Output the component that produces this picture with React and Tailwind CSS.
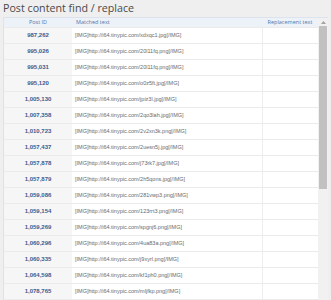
const rows = [
  ["987,262", "xdxqc1.jpg"],
  ["995,026", "20l11fq.png"],
  ["995,031", "20l11fq.png"],
  ["995,120", "o0z5ft.jpg"],
  ["1,005,130", "jpiz3l.jpg"],
  ["1,007,358", "2qo3lah.jpg"],
  ["1,010,723", "2v2xn3k.png"],
  ["1,057,437", "2uesn5j.jpg"],
  ["1,057,878", "j73rk7.jpg"],
  ["1,057,879", "2h5qons.jpg"],
  ["1,059,086", "281vwp3.png"],
  ["1,059,154", "123rrt3.png"],
  ["1,059,269", "spgnj6.png"],
  ["1,060,296", "4ua83a.png"],
  ["1,060,335", "j9xyrl.png"],
  ["1,064,598", "kf1ph0.png"],
  ["1,078,765", "mljfkp.png"],
];

export default function App() {
  return (
    <div className="h-[300px] overflow-hidden bg-[#efefef] px-[3px] font-['Open_Sans','Noto_Sans',sans-serif]">
      <h1 className="h-[17px] pt-[1px] text-[10.7px] leading-[14px] text-[#4a4a4a]">Post content find / replace</h1>

      <div className="flex h-[283px] border-t border-l border-[#dde3ec] bg-white">
        <div className="min-w-0 flex-1 overflow-hidden">
          <table className="w-full table-fixed border-collapse text-[6px]">
            <colgroup>
              <col className="w-[68px]" />
              <col className="w-[190px]" />
              <col />
            </colgroup>
            <thead>
              <tr className="h-[9px] bg-[#edf2f9] text-[5.5px] text-[#5277ab]">
                <th className="font-normal">Post ID</th>
                <th className="px-[4px] text-left font-normal">Matched text</th>
                <th className="px-[3px] text-center font-normal">Replacement text</th>
              </tr>
            </thead>
            <tbody>
              {rows.map(([id, file], i) => (
                <tr key={i} className="h-[16px] border-t border-[#ebebeb]">
                  <td className="bg-[#f6f6f6] text-center font-['Liberation_Sans',sans-serif] text-[6px] font-bold text-[#3b5b8e]">{id}</td>
                  <td className="truncate border-r border-[#ededed] px-[3px] font-['Liberation_Sans',sans-serif] text-[5.5px] text-[#6a6a6a]">
                    [IMG]http://i64.tinypic.com/{file}[/IMG]
                  </td>
                  <td />
                </tr>
              ))}
              <tr className="h-[16px] border-t border-[#ebebeb]">
                <td className="bg-[#f6f6f6]" />
                <td className="border-r border-[#ededed]" />
                <td />
              </tr>
            </tbody>
          </table>
        </div>

        <div className="flex w-[10px] shrink-0 flex-col bg-[#f1f1f1]">
          <div className="flex h-[8px] items-center justify-center">
            <svg width="5" height="3" viewBox="0 0 5 3">
              <path d="M0 3 L2.5 0 L5 3 Z" fill="#a3a3a3" />
            </svg>
          </div>
          <div className="mx-[1px] h-[163px] bg-[#c1c1c1]" />
        </div>
      </div>
    </div>
  );
}
